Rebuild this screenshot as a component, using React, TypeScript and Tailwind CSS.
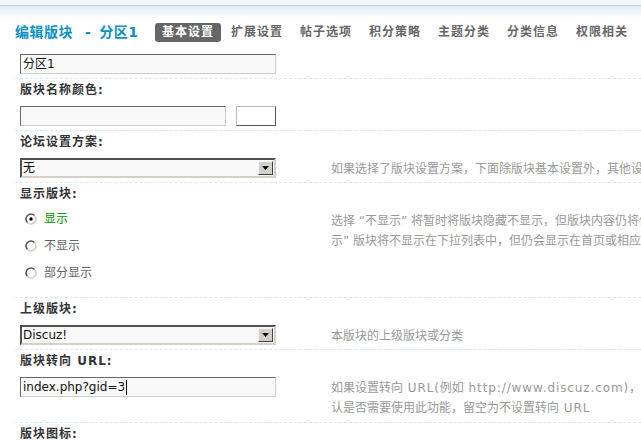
import React from "react";

const tabs = ["基本设置", "扩展设置", "帖子选项", "积分策略", "主题分类", "分类信息", "权限相关"];

const TextBox = ({ value, width = "w-[256px]", caret }: { value?: string; width?: string; caret?: boolean }) => (
  <div
    className={`${width} flex h-[20px] items-center border border-t-[#666] border-l-[#666] border-b-[#ccc] border-r-[#ccc] bg-[#f9f9f9] pl-[2px] text-[12px] leading-[18px] text-[#111]`}
  >
    {value}
    {caret && <span className="ml-[1px] inline-block h-[15px] w-[1px] bg-black" />}
  </div>
);

const SelectBox = ({ value }: { value: string }) => (
  <div className="flex h-[20px] w-[256px] items-center border-2 border-t-[#505050] border-l-[#505050] border-b-[#d4d0c8] border-r-[#d4d0c8] bg-[#f9f9f9]">
    <span className="flex-1 pl-[1px] text-[12px] leading-[16px] text-[#111]">{value}</span>
    <span className="mr-[1px] flex h-[14px] w-[15px] items-center justify-center border border-t-[#f4f4f4] border-l-[#f4f4f4] border-b-[#404040] border-r-[#404040] bg-[#d4d0c8]">
      <svg width="7" height="4" viewBox="0 0 7 4">
        <path d="M0 0h7L3.5 4z" fill="#000" />
      </svg>
    </span>
  </div>
);

const Radio = ({ checked }: { checked?: boolean }) => (
  <svg width="12" height="12" viewBox="0 0 12 12" className="mr-[7px] shrink-0">
    <circle cx="6" cy="6" r="5" fill="#fff" />
    <path d="M2.46 9.54A5 5 0 0 1 9.54 2.46" fill="none" stroke="#555" strokeWidth="1.6" />
    <path d="M9.54 2.46A5 5 0 0 1 2.46 9.54" fill="none" stroke="#d0ccc4" strokeWidth="1.6" />
    {checked && <circle cx="6" cy="6" r="1.7" fill="#000" />}
  </svg>
);

// latin bits in the tips are drawn wider in the original
const Latin = ({ children }: { children: React.ReactNode }) => (
  <span className="tracking-[0.9px]">{children}</span>
);

const Block = ({
  label,
  children,
  tip,
  tipClass = "pb-[3px]",
}: {
  label: string;
  children: React.ReactNode;
  tip?: React.ReactNode;
  tipClass?: string;
}) => (
  <div className="border-t border-dashed border-[#d5e6f3]">
    <div className="h-[22px] pl-[5px] text-[12px] leading-[22px] font-bold tracking-[1px] text-[#333]">{label}</div>
    <div className="flex">
      <div className="w-[316px] shrink-0 pt-[5px] pb-[4px] pl-[5px]">{children}</div>
      <div className={`flex-1 whitespace-nowrap pt-[6px] text-[12px] leading-[20px] text-[#999] ${tipClass}`}>{tip}</div>
    </div>
  </div>
);

export default function App() {
  return (
    <div className="h-[441px] w-full overflow-hidden bg-white font-[family-name:DejaVu_Sans,Noto_Sans_CJK_SC,sans-serif]">
      <div className="h-[5px] bg-[#f2f7fb]" />
      <div className="h-[13px] border-t border-[#bcd3e3] bg-gradient-to-b from-[#e1ecf6] to-white" />

      <div className="flex h-[28px] items-center pl-[15px]">
        <h3 className="w-[140px] shrink-0 text-[14px] font-bold tracking-[0.5px] text-[#0992c8]">
          编辑版块<span className="ml-[12px] mr-[8px]">-</span>分区1
        </h3>
        <ul className="flex gap-[3px]">
          {tabs.map((t, i) => (
            <li
              key={t}
              className={`h-[19px] rounded-[3px] px-[7px] text-[12px] leading-[19px] font-bold tracking-[1px] whitespace-nowrap ${
                i === 0 ? "bg-[#666] text-white" : "text-[#666]"
              }`}
            >
              {t}
            </li>
          ))}
        </ul>
      </div>

      <div className="pl-[15px]">
        <div className="pt-[8px] pb-[4px] pl-[5px]">
          <TextBox value="分区1" />
        </div>

        <Block label="版块名称颜色:">
          <div className="flex gap-[10px]">
            <TextBox width="w-[206px]" />
            <div className="h-[20px] w-[40px] border border-t-[#bbb] border-l-[#bbb] border-b-[#555] border-r-[#555] bg-white" />
          </div>
        </Block>

        <Block label="论坛设置方案:" tip="如果选择了版块设置方案，下面除版块基本设置外，其他设置将被方案中的设置所替代">
          <SelectBox value="无" />
        </Block>

        <Block
          label="显示版块:"
          tip={
            <>
              <div>选择 “不显示” 将暂时将版块隐藏不显示，但版块内容仍将保留，且用户仍可通过直接提供带有 fid 的 URL 访问到此版块；“部分显</div>
              <div>示” 版块将不显示在下拉列表中，但仍会显示在首页或相应的版块列表中</div>
            </>
          }
        >
          <ul className="-mt-[5px] pb-[7px] text-[12px]">
            <li className="flex h-[27px] items-center pl-[5px] text-[#090]">
              <Radio checked />
              显示
            </li>
            <li className="flex h-[27px] items-center pl-[5px] text-[#666]">
              <Radio />
              不显示
            </li>
            <li className="flex h-[27px] items-center pl-[5px] text-[#666]">
              <Radio />
              部分显示
            </li>
          </ul>
        </Block>

        <Block label="上级版块:" tip="本版块的上级版块或分类">
          <SelectBox value="Discuz!" />
        </Block>

        <Block
          label="版块转向 URL:"
          tipClass="pb-[4px]"
          tip={
            <>
              <div>
                如果设置转向<Latin> URL(</Latin>例如<Latin> http://www.discuz.com)</Latin>，用户点击本分版块将进入转向的
                URL，一旦设定将无法进入版块页面，请确
              </div>
              <div>
                认是否需要使用此功能，留空为不设置转向<Latin> URL</Latin>
              </div>
            </>
          }
        >
          <TextBox value="index.php?gid=3" caret />
        </Block>

        <Block label="版块图标:" tip="版块名称旁边显示的小图标">
          <TextBox />
        </Block>
      </div>
    </div>
  );
}
